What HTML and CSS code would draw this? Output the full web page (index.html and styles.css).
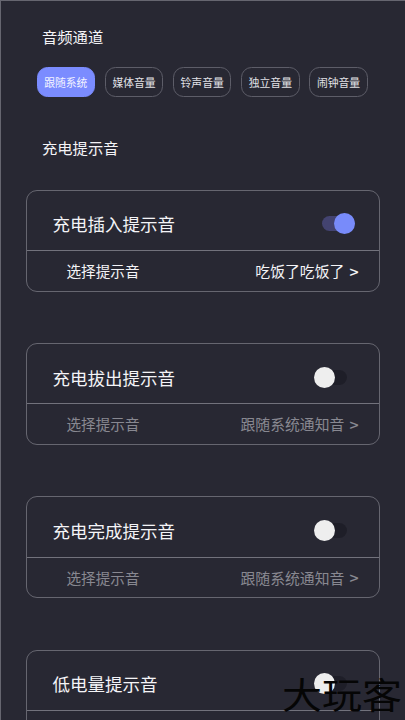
FILE: index.html
```html
<!DOCTYPE html>
<html lang="zh-CN">
<head>
<meta charset="utf-8">
<title>充电提示音</title>
<link rel="stylesheet" href="styles.css">
</head>
<body>
<main class="screen">
  <h2 class="heading">音频通道</h2>
  <div class="chips">
    <span class="chip chip-active">跟随系统</span>
    <span class="chip">媒体音量</span>
    <span class="chip">铃声音量</span>
    <span class="chip">独立音量</span>
    <span class="chip">闹钟音量</span>
  </div>
  <h2 class="heading">充电提示音</h2>
  <div class="cards">
    <section class="card">
      <div class="card-head"><span>充电插入提示音</span><i class="switch on"></i></div>
      <div class="card-row"><span>选择提示音</span><span class="value">吃饭了吃饭了<b class="arrow">&gt;</b></span></div>
    </section>
    <section class="card disabled">
      <div class="card-head"><span>充电拔出提示音</span><i class="switch"></i></div>
      <div class="card-row"><span>选择提示音</span><span class="value">跟随系统通知音<b class="arrow">&gt;</b></span></div>
    </section>
    <section class="card disabled">
      <div class="card-head"><span>充电完成提示音</span><i class="switch"></i></div>
      <div class="card-row"><span>选择提示音</span><span class="value">跟随系统通知音<b class="arrow">&gt;</b></span></div>
    </section>
    <section class="card disabled">
      <div class="card-head"><span>低电量提示音</span><i class="switch"></i></div>
    </section>
  </div>
  <div class="watermark">大玩客</div>
</main>
</body>
</html>
```
FILE: styles.css
```css
* { box-sizing: border-box; }
body { margin: 0; background: #282833; overflow: hidden; }
.screen {
  position: relative;
  width: 405px;
  height: 720px;
  overflow: hidden;
  padding: 24px 25px 0 25px;
  border-top: 1px solid #666670;
  border-left: 1px solid #666670;
  background: #282833;
  color: #f4f4f7;
  font-family: "Noto Sans CJK SC", sans-serif;
}
.heading {
  margin: 0 0 0 16px;
  height: 22px;
  font-size: 15.3px;
  line-height: 22px;
  font-weight: 400;
}
.chips {
  display: flex;
  gap: 9.8px;
  margin: 20px 0 39px 10.6px;
}
.chip {
  flex: none;
  width: 58.4px;
  height: 30px;
  border: 1px solid #5d5d68;
  border-radius: 10.5px;
  font-size: 10.8px;
  line-height: 29px;
  text-align: center;
  white-space: nowrap;
  color: #e2e2e7;
}
.chip-active { background: #7b8cff; border-color: #7b8cff; color: #f4f4ff; }
.cards { display: flex; flex-direction: column; gap: 51.4px; margin-top: 31.5px; }
.card {
  flex: none;
  height: 102px;
  border: 1px solid #666670;
  border-radius: 11px;
}
.card-head {
  display: flex;
  align-items: center;
  justify-content: space-between;
  height: 60.5px;
  padding: 7px 24px 0 25.5px;
  border-bottom: 1px solid #72727c;
  font-size: 17.5px;
}
.card-row {
  display: flex;
  align-items: center;
  justify-content: space-between;
  height: 39px;
  padding: 0 20.5px 0 39.5px;
  font-size: 14.6px;
}
.value { display: flex; align-items: center; font-size: 14.85px; }
.arrow { margin-left: 5px; font-weight: 500; font-size: 16px; }
.disabled .card-row { color: #888891; }
.switch {
  display: flex;
  align-items: center;
  width: 33px;
  height: 15px;
  border-radius: 8px;
  background: linear-gradient(90deg, transparent 10px, #1e1e28 10px);
  margin-right: 8px;
}
.switch::before {
  content: "";
  flex: none;
  width: 21px;
  height: 21px;
  border-radius: 50%;
  background: #eeeeee;
}
.switch.on {
  justify-content: flex-end;
  background: #434370;
  margin-right: 0;
}
.switch.on::before { background: #788bfa; }
.watermark {
  position: absolute;
  left: 281px;
  top: 671px;
  font-size: 40px;
  line-height: 44px;
  font-weight: 400;
  color: #050505;
  white-space: nowrap;
  transform: scaleY(.9);
}
```
